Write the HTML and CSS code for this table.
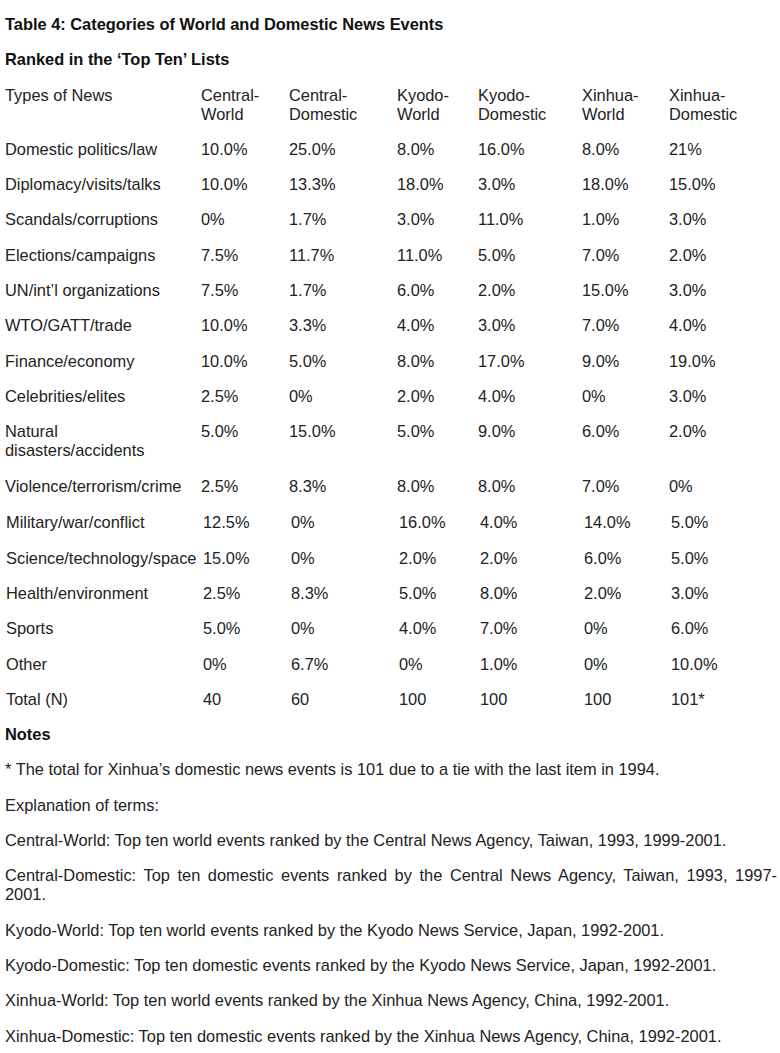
FILE: index.html
```html
<!DOCTYPE html>
<html>
<head>
<meta charset="utf-8">
<link rel="stylesheet" href="styles.css">
</head>
<body>
<div class="page">
  <p class="title">Table 4: Categories of World and Domestic News Events</p>
  <p class="title">Ranked in the ‘Top Ten’ Lists</p>
  <table class="data">
    <colgroup>
      <col class="c0"><col class="c1"><col class="c2"><col class="c3"><col class="c4"><col class="c5"><col class="c6">
    </colgroup>
    <tr><td>Types of News</td><td>Central-<br>World</td><td>Central-<br>Domestic</td><td>Kyodo-<br>World</td><td>Kyodo-<br>Domestic</td><td>Xinhua-<br>World</td><td>Xinhua-<br>Domestic</td></tr>
    <tr><td>Domestic politics/law</td><td>10.0%</td><td>25.0%</td><td>8.0%</td><td>16.0%</td><td>8.0%</td><td>21%</td></tr>
    <tr><td>Diplomacy/visits/talks</td><td>10.0%</td><td>13.3%</td><td>18.0%</td><td>3.0%</td><td>18.0%</td><td>15.0%</td></tr>
    <tr><td>Scandals/corruptions</td><td>0%</td><td>1.7%</td><td>3.0%</td><td>11.0%</td><td>1.0%</td><td>3.0%</td></tr>
    <tr><td>Elections/campaigns</td><td>7.5%</td><td>11.7%</td><td>11.0%</td><td>5.0%</td><td>7.0%</td><td>2.0%</td></tr>
    <tr><td>UN/int’l organizations</td><td>7.5%</td><td>1.7%</td><td>6.0%</td><td>2.0%</td><td>15.0%</td><td>3.0%</td></tr>
    <tr><td>WTO/GATT/trade</td><td>10.0%</td><td>3.3%</td><td>4.0%</td><td>3.0%</td><td>7.0%</td><td>4.0%</td></tr>
    <tr><td>Finance/economy</td><td>10.0%</td><td>5.0%</td><td>8.0%</td><td>17.0%</td><td>9.0%</td><td>19.0%</td></tr>
    <tr><td>Celebrities/elites</td><td>2.5%</td><td>0%</td><td>2.0%</td><td>4.0%</td><td>0%</td><td>3.0%</td></tr>
    <tr><td>Natural<br>disasters/accidents</td><td>5.0%</td><td>15.0%</td><td>5.0%</td><td>9.0%</td><td>6.0%</td><td>2.0%</td></tr>
    <tr><td>Violence/terrorism/crime</td><td>2.5%</td><td>8.3%</td><td>8.0%</td><td>8.0%</td><td>7.0%</td><td>0%</td></tr>
    <tr class="shift gap"><td>Military/war/conflict</td><td>12.5%</td><td>0%</td><td>16.0%</td><td>4.0%</td><td>14.0%</td><td>5.0%</td></tr>
    <tr class="shift"><td>Science/technology/space</td><td>15.0%</td><td>0%</td><td>2.0%</td><td>2.0%</td><td>6.0%</td><td>5.0%</td></tr>
    <tr class="shift"><td>Health/environment</td><td>2.5%</td><td>8.3%</td><td>5.0%</td><td>8.0%</td><td>2.0%</td><td>3.0%</td></tr>
    <tr class="shift"><td>Sports</td><td>5.0%</td><td>0%</td><td>4.0%</td><td>7.0%</td><td>0%</td><td>6.0%</td></tr>
    <tr class="shift"><td>Other</td><td>0%</td><td>6.7%</td><td>0%</td><td>1.0%</td><td>0%</td><td>10.0%</td></tr>
    <tr class="shift"><td>Total (N)</td><td>40</td><td>60</td><td>100</td><td>100</td><td>100</td><td>101*</td></tr>
  </table>
  <p class="title">Notes</p>
  <p class="note">* The total for Xinhua’s domestic news events is 101 due to a tie with the last item in 1994.</p>
  <p class="note">Explanation of terms:</p>
  <p class="note">Central-World: Top ten world events ranked by the Central News Agency, Taiwan, 1993, 1999-2001.</p>
  <p class="note">Central-Domestic: Top ten domestic events ranked by the Central News Agency, Taiwan, 1993, 1997-2001.</p>
  <p class="note">Kyodo-World: Top ten world events ranked by the Kyodo News Service, Japan, 1992-2001.</p>
  <p class="note">Kyodo-Domestic: Top ten domestic events ranked by the Kyodo News Service, Japan, 1992-2001.</p>
  <p class="note">Xinhua-World: Top ten world events ranked by the Xinhua News Agency, China, 1992-2001.</p>
  <p class="note">Xinhua-Domestic: Top ten domestic events ranked by the Xinhua News Agency, China, 1992-2001.</p>
</div>
</body>
</html>
```

FILE: styles.css
```css
html, body {
  margin: 0;
  padding: 0;
  background: #ffffff;
}
body {
  font-family: "Liberation Sans", Arial, sans-serif;
  font-size: 16.4px;
  line-height: 19px;
  color: #222222;
}
.page {
  padding: 7px 0 0 5px;
  width: 775px;
}
.title {
  margin: 0;
  padding: 8px 0 8.3px;
  font-weight: bold;
  color: #111111;
}
.data {
  border-collapse: collapse;
  table-layout: fixed;
  width: 775px;
}
.data td {
  padding: 8px 0 8.3px;
  vertical-align: top;
  white-space: nowrap;
}
.data .gap td {
  padding-top: 9.5px;
}
.data .shift td {
  padding-left: 2px;
}
.data .shift td:first-child {
  padding-left: 1px;
}
.c0 { width: 196px; }
.c1 { width: 88px; }
.c2 { width: 108px; }
.c3 { width: 81px; }
.c4 { width: 104px; }
.c5 { width: 87px; }
.c6 { width: 111px; }
.note {
  margin: 0;
  padding: 8px 0 8.3px;
  text-align: justify;
  width: 772px;
}
```
